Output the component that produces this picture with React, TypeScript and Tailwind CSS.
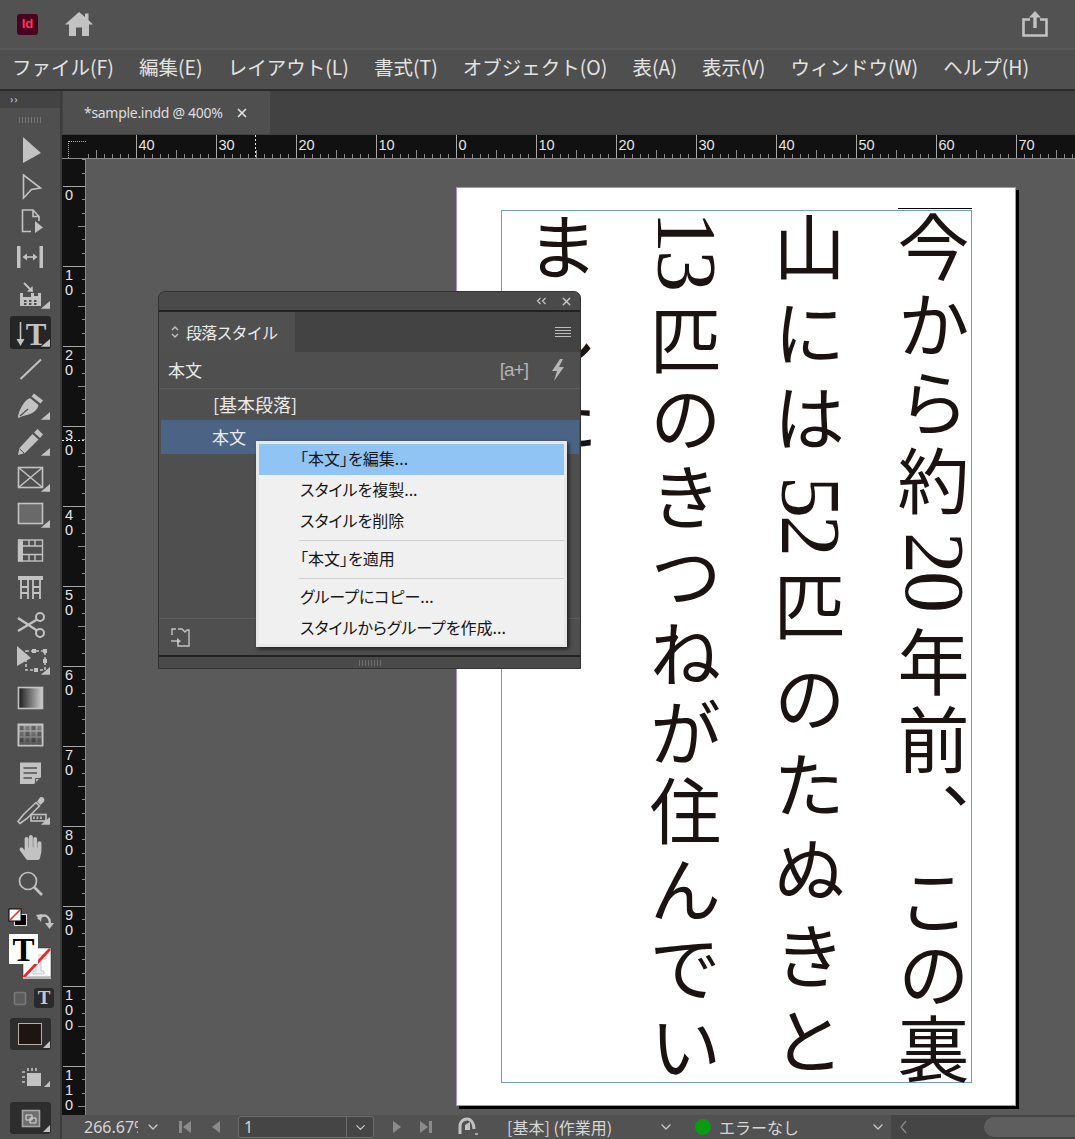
import React from 'react';
import { ChevronDown, X } from 'lucide-react';
import { FaHandPaper } from 'react-icons/fa';

const ICON = '#c2c2c2';

const menus = ['ファイル(F)', '編集(E)', 'レイアウト(L)', '書式(T)', 'オブジェクト(O)', '表(A)', '表示(V)', 'ウィンドウ(W)', 'ヘルプ(H)'];

const Corner = () => <polygon points="40,25 40,31 33,31" fill={ICON} />;

const Tool: React.FC<{ h: string; children: React.ReactNode; corner?: boolean; active?: boolean }> = ({ h, children, corner, active }) => (
  <div className={`${h} flex items-center justify-center shrink-0`}>
    <div className={active ? 'w-[41px] h-[33px] rounded-[3px] bg-[#262626] flex items-center justify-center' : 'flex items-center justify-center'}>
      <svg width="40" height="36" viewBox="0 0 40 36" fill="none" stroke={ICON} strokeWidth="1.6">
        {children}
        {corner && <Corner />}
      </svg>
    </div>
  </div>
);

const Tools = () => (
  <div className="flex flex-col">
    <Tool h="h-[36px]"><polygon points="13,5 31,21 13,31" fill={ICON} stroke="none" /></Tool>
    <Tool h="h-[36px]"><polygon points="13.5,7 30.5,20 21.5,21.5 13.5,30" /></Tool>
    <Tool h="h-[34px]">
      <path d="M21 28.5H12.5V7H23L29 13.5V18M23 7V13.5H29" />
      <polygon points="25,18 33,24.5 25,30" fill={ICON} stroke="none" />
    </Tool>
    <Tool h="h-[38px]">
      <rect x="7" y="7" width="3.5" height="22" fill={ICON} stroke="none" />
      <rect x="29.5" y="7" width="3.5" height="22" fill={ICON} stroke="none" />
      <path d="M16 18H24" />
      <polygon points="12.5,18 17,14.5 17,21.5" fill={ICON} stroke="none" />
      <polygon points="27.5,18 23,14.5 23,21.5" fill={ICON} stroke="none" />
    </Tool>
    <Tool h="h-[38px]" corner>
      <path d="M10 16V29H31V16H28V19H24V16H21V20H13V16Z" fill={ICON} stroke="none" />
      <path d="M14 24h2.5M19 24h2.5M24 24h2.5M19 27h2.5M14 27h2.5M24 27h2.5" stroke="#505050" strokeWidth="2" />
      <path d="M14 6L21 13" strokeWidth="2" />
      <polygon points="23,15 22.5,9 17,14.5" fill={ICON} stroke="none" />
    </Tool>
    <Tool h="h-[37px]" active corner>
      <path d="M10.5 7V27" strokeWidth="1.6" />
      <polygon points="10.5,31 6.5,24 14.5,24" fill={ICON} stroke="none" />
      <text x="26" y="30" textAnchor="middle" fontFamily="'Liberation Serif',serif" fontWeight="700" fontSize="31" fill={ICON} stroke="none">T</text>
    </Tool>
    <Tool h="h-[36px]"><path d="M10.5 28L31 8.5" strokeWidth="2" /></Tool>
    <Tool h="h-[37px]" corner>
      <path d="M24 5.5L33 12.5L30.5 15.5L21.5 8.5Z" fill={ICON} stroke="none" />
      <path d="M20 10L28.5 17C27.5 23 21 26.5 13 28L8.5 30L8 28C10 21 13.5 13 20 10Z" fill={ICON} stroke="none" />
      <path d="M10 28L18 21" stroke="#505050" strokeWidth="1.3" />
    </Tool>
    <Tool h="h-[36px]" corner>
      <path d="M27.5 5L33 10.5L30 14L24 8.5Z" fill={ICON} stroke="none" />
      <path d="M22.5 10L28.5 15.5L15 29L8 31L9.5 24Z" fill={ICON} stroke="none" />
      <path d="M9.8 25L14 29" stroke="#505050" strokeWidth="1" />
    </Tool>
    <Tool h="h-[36px]" corner>
      <rect x="8.5" y="7.5" width="24" height="20" />
      <path d="M8.5 7.5L32.5 27.5M32.5 7.5L8.5 27.5" />
    </Tool>
    <Tool h="h-[36px]" corner><rect x="8.5" y="7.5" width="24" height="20" fill="#696969" /></Tool>
    <Tool h="h-[36px]">
      <rect x="8.5" y="8" width="24" height="21" strokeWidth="1.4" />
      <rect x="8" y="7.5" width="5" height="22" fill={ICON} stroke="none" />
      <path d="M13 14H32M13 22.5H32M19 8V14M25 8V14M19 22.5V29M25 22.5V29" strokeWidth="1.4" />
    </Tool>
    <Tool h="h-[38px]">
      <rect x="8" y="7" width="25" height="4" fill={ICON} stroke="none" />
      <path d="M11 11V30M18 11V30M23 11V30M30 11V30M11 18H18M11 24H18M23 18H30M23 24H30" strokeWidth="1.8" />
    </Tool>
    <Tool h="h-[37px]">
      <circle cx="30" cy="10" r="4" strokeWidth="2" />
      <circle cx="30" cy="26" r="4" strokeWidth="2" />
      <path d="M27 12.5L8 24M27 23.5L8 11" strokeWidth="2.4" />
    </Tool>
    <Tool h="h-[36px]" corner>
      <rect x="16" y="8" width="19" height="19" strokeDasharray="3 2" />
      <rect x="22" y="6" width="4" height="4" fill={ICON} stroke="none" />
      <rect x="33" y="6" width="4" height="4" fill={ICON} stroke="none" />
      <rect x="33" y="16" width="4" height="4" fill={ICON} stroke="none" />
      <rect x="24" y="25" width="4" height="4" fill={ICON} stroke="none" />
      <polygon points="7,3 21,15 7,23" fill={ICON} stroke="none" />
    </Tool>
    <Tool h="h-[37px]">
      <defs>
        <linearGradient id="grad" x1="0" x2="1" y1="0" y2="0">
          <stop offset="0" stopColor="#1b1b1b" />
          <stop offset="1" stopColor="#cfcfcf" />
        </linearGradient>
      </defs>
      <rect x="8.5" y="7.5" width="24" height="21" fill="url(#grad)" />
    </Tool>
    <Tool h="h-[37px]">
      <defs>
        <pattern id="check" width="12" height="12" patternUnits="userSpaceOnUse" x="8.5" y="8">
          <rect width="12" height="12" fill="#7a7a7a" />
          <rect width="6" height="6" fill="#555555" />
          <rect x="6" y="6" width="6" height="6" fill="#555555" />
        </pattern>
        <linearGradient id="fade" x1="0" x2="0" y1="0" y2="1">
          <stop offset="0" stopColor="#8a8a8a" stopOpacity="0.3" />
          <stop offset="1" stopColor="#222222" stopOpacity="0.7" />
        </linearGradient>
      </defs>
      <rect x="8.5" y="7.5" width="24" height="21" fill="url(#check)" />
      <rect x="8.5" y="7.5" width="24" height="21" fill="url(#fade)" />
    </Tool>
    <Tool h="h-[39px]">
      <path d="M10 7.5H31V22L24 29H10Z" fill={ICON} stroke="none" />
      <path d="M13.5 13H27M13.5 18H27M13.5 23H22" stroke="#505050" strokeWidth="1.6" />
      <path d="M31 23.5H25.5V29" stroke="#505050" strokeWidth="1" />
    </Tool>
    <Tool h="h-[38px]" corner>
      <path d="M30 4.5C32.5 3 35.5 6 34 8.5L30.5 12L27 8.5Z" fill={ICON} stroke="none" />
      <path d="M26 9.5L29.5 13L17 25.5L10 30.5L8 28.5L13.5 21.5Z" stroke={ICON} />
      <rect x="21" y="21.5" width="15" height="6.5" fill="#505050" />
      <path d="M24 23.5V26M27.5 23.5V26M31 23.5V26" strokeWidth="1.6" />
    </Tool>
    <Tool h="h-[35px]">
      <foreignObject x="8" y="5" width="26" height="26">
        <FaHandPaper size={25} color={ICON} />
      </foreignObject>
    </Tool>
    <Tool h="h-[35px]">
      <circle cx="18" cy="16" r="8.5" strokeWidth="1.7" />
      <path d="M24 22L32 30" strokeWidth="2.6" />
    </Tool>
  </div>
);

const Swatches = () => (
  <svg width="60" height="239" viewBox="0 0 60 239" className="shrink-0" fill="none">
    <rect x="14.5" y="9.5" width="12" height="11" fill="#000" stroke="#ddd" />
    <rect x="9" y="4" width="12" height="12" fill="#fff" stroke="#000" />
    <path d="M10 15L20 5" stroke="#e03030" strokeWidth="1.6" />
    <path d="M38 14C44 8 50 10 50 20" stroke={ICON} strokeWidth="2.4" />
    <polygon points="36,10 42,9 41,17" fill={ICON} />
    <polygon points="45,18 54,18 49.5,24" fill={ICON} />
    <rect x="23" y="43" width="28" height="29" fill="#fff" stroke="#222" strokeWidth="0.5" />
    <path d="M31 50H46V54H41V66H44V69H33V66H36V54H31Z" fill="#eee" stroke="#bbb" strokeWidth="0.8" />
    <path d="M23 73L50 44" stroke="#e8262a" strokeWidth="2.6" />
    <path d="M23 73H51" stroke="#fff" strokeWidth="1.2" />
    <rect x="9" y="29" width="29" height="30" fill="#fff" />
    <text x="23.5" y="56" textAnchor="middle" fontFamily="'Liberation Serif',serif" fontWeight="700" fontSize="33" fill="#000">T</text>
    <rect x="14.5" y="87.5" width="11" height="12" rx="1" fill="#5c5c5c" stroke="#777" strokeWidth="1.6" />
    <rect x="34" y="83" width="20" height="20" rx="3" fill="#2a2a2a" />
    <text x="44" y="99" textAnchor="middle" fontFamily="'Liberation Serif',serif" fontWeight="700" fontSize="19" fill="#c8c8c8">T</text>
    <rect x="10" y="113" width="41" height="32" rx="3" fill="#2d2d2d" />
    <rect x="18.5" y="118.5" width="23" height="21" fill="#1e1412" stroke="#b9aea8" />
    <polygon points="50,136 50,143 43,143" fill={ICON} />
    <rect x="27" y="168" width="14" height="13" fill={ICON} />
    <path d="M22 167h3M22 172h3M22 177h3M28 163v3M32 163v3M36 163v3" stroke={ICON} strokeWidth="1.6" />
    <polygon points="50,176 50,182 44,182" fill={ICON} />
    <rect x="10" y="197" width="41" height="32" rx="3" fill="#2d2d2d" />
    <rect x="22.5" y="205.5" width="17" height="16" fill="#6e6e6e" stroke="#a5a5a5" strokeWidth="1.6" />
    <path d="M26 210h6v5h-6zM30 213h6v5h-6z" stroke="#ddd" strokeWidth="1" />
    <polygon points="50,220 50,227 43,227" fill={ICON} />
  </svg>
);

const range = (n: number) => Array.from({ length: n }, (_, i) => i);

const TopRuler = () => (
  <svg width="989" height="24" viewBox="0 0 989 24" className="block shrink-0 font-['Liberation_Sans',sans-serif]">
    <rect width="989" height="24" fill="#111" />
    {range(130).map((i) => {
      const x = 370.5 + (i - 46) * 8;
      const major = (i - 46) % 10 === 0;
      const mid = (i - 46) % 5 === 0;
      return <path key={i} d={`M${x} ${major ? 0 : mid ? 15 : 19}V23`} stroke={major ? '#a8a8a8' : '#8c8c8c'} strokeWidth="1" />;
    })}
    {[40, 30, 20, 10, 0, 10, 20, 30, 40, 50, 60, 70].map((v, i) => (
      <text key={i} x={52.5 + i * 80} y="15" fontSize="14.5" fill="#e4e4e4">{v}</text>
    ))}
    <path d="M169.5 0V23" stroke="#eee" strokeDasharray="2 2" />
    <path d="M0 23.5H989" stroke="#8a8a8a" />
  </svg>
);

// vertical ruler is split in six, not ten
const LeftRuler = () => (
  <svg width="24" height="956" viewBox="0 0 24 956" className="block shrink-0 font-['Liberation_Sans',sans-serif]">
    <rect width="24" height="956" fill="#111" />
    {range(74).map((i) => {
      const y = Math.round(27 + ((i - 2) * 80) / 6) + 0.5;
      const major = (i - 2) % 6 === 0;
      const mid = (i - 2) % 3 === 0;
      return <path key={i} d={`M${major ? 1 : mid ? 16 : 20} ${y}H24`} stroke={major ? '#a8a8a8' : '#8c8c8c'} strokeWidth="1" />;
    })}
    {range(12).map((i) =>
      String(i * 10).split('').map((d, j) => (
        <text key={`${i}-${j}`} x="3" y={27 + i * 80 + 14 + j * 15} fontSize="14.5" fill="#e4e4e4">{d}</text>
      ))
    )}
    <path d="M0 281.5H24" stroke="#eee" strokeDasharray="2 2" />
    <path d="M23.5 0V956" stroke="#8a8a8a" />
  </svg>
);

const Column: React.FC<{ tracking: string; children: React.ReactNode }> = ({ tracking, children }) => (
  <div className={`w-[73px] h-full shrink-0 whitespace-nowrap text-[72px] leading-[73px] text-[#1a1311] [writing-mode:vertical-rl] ${tracking}`}>
    {children}
  </div>
);

const Page = () => (
  <div className="absolute left-[370px] top-[28px] w-[560px] h-[919px] bg-white border border-[#b48ac4] shadow-[3px_3px_0_#000] font-['Liberation_Serif','Noto_Sans_CJK_JP',serif]">
    <div className="relative mt-[22px] ml-[44px] w-[471px] h-[873px] border border-[#6d9bd6] flex flex-row-reverse gap-[51px] pr-[8px] overflow-visible">
      <Column tracking="tracking-[6px]">今から約<span className="relative left-[8px] pt-[9px] text-[84px] tracking-[-3px]">20</span><span className="pt-[16px]">年前、</span><span className="pt-[5px] tracking-[2px]">この裏</span></Column>
      <Column tracking="tracking-[13.5px]">山には<span className="relative left-[8px] pt-[8px] text-[84px] tracking-[-3px]">52</span><span className="pt-[16px]">匹</span><span className="pt-[8px]">のたぬきと</span></Column>
      <Column tracking="tracking-[6.5px]"><span className="relative left-[8px] text-[84px] tracking-[-3px]">13</span><span className="pt-[15px]">匹のきつねが住んでい</span></Column>
      <Column tracking="tracking-[13.5px]">ました</Column>
      <div className="absolute right-[-1px] top-[-3px] w-[74px] h-px bg-black" />
    </div>
  </div>
);

const items: (string | null)[] = ['「本文」を編集...', 'スタイルを複製...', 'スタイルを削除', null, '「本文」を適用', null, 'グループにコピー...', 'スタイルからグループを作成...'];

const ContextMenu = () => (
  <div className="absolute left-[97px] top-[149px] w-[311px] h-[206px] bg-[#f0f0f0] border-[3px] border-[#e8e8e8] shadow-[2px_2px_4px_rgba(0,0,0,0.6)] text-[16px] text-[#161616] flex flex-col [font-feature-settings:'palt']">
    {items.map((item, i) =>
      item === null ? (
        <div key={i} className="h-[7px] flex items-center pl-[40px]">
          <div className="w-full h-px bg-[#d0d0d0]" />
        </div>
      ) : (
        <div key={i} className={`h-[31px] shrink-0 flex items-center pl-[41px] pb-[3px] ${i === 0 ? 'bg-[#90c4f5]' : ''}`}>{item}</div>
      )
    )}
  </div>
);

const StylePanel = () => (
  <div className="absolute left-[72px] top-[132px] w-[423px] h-[378px] flex flex-col rounded-t-[7px] bg-[#4f4f4f] border border-[#333] text-[#eaeaea]">
    <div className="h-[18px] rounded-t-[7px] bg-[#4a4a4a] flex items-center justify-end gap-[13px] pr-[7px] shrink-0">
      <svg width="11" height="8" viewBox="0 0 11 8" fill="none" stroke="#c8c8c8" strokeWidth="1.2"><path d="M4.5 1L1.5 4L4.5 7M9.5 1L6.5 4L9.5 7" /></svg>
      <X size={13} strokeWidth={2.5} color="#c8c8c8" />
    </div>
    <div className="h-[2px] bg-[#222] shrink-0" />
    <div className="h-[40px] flex bg-[#434343] shrink-0 ml-[1px]">
      <div className="w-[135px] bg-[#505050] flex items-center pl-[10px] gap-[6px]">
        <svg width="10" height="14" viewBox="0 0 10 14" fill="none" stroke="#bdbdbd" strokeWidth="1.5"><path d="M2 5L5 2L8 5M2 9L5 12L8 9" /></svg>
        <span className="text-[16px] tracking-[-0.8px]">段落スタイル</span>
      </div>
      <div className="flex-1 flex items-center justify-end pr-[9px]">
        <svg width="16" height="12" viewBox="0 0 16 12" stroke="#bdbdbd" strokeWidth="1.2"><path d="M0 1.5H16M0 4.5H16M0 7.5H16M0 10.5H16" /></svg>
      </div>
    </div>
    <div className="h-[37px] flex items-center pl-[9px] pr-[15px] border-b border-[#5c5c5c] shrink-0">
      <span className="flex-1 text-[17px]">本文</span>
      <span className="text-[19px] text-[#b5b5b5] mr-[23px] font-['Liberation_Sans',sans-serif] font-light tracking-[-1px]">[a+]</span>
      <svg width="14" height="22" viewBox="0 0 14 22" fill="#b5b5b5"><polygon points="9,0 1,12 6,12 3,22 13,8 8,8 12,0" /></svg>
    </div>
    <div className="h-[31px] flex items-center pl-[54px] text-[18px] shrink-0">[基本段落]</div>
    <div className="h-[34px] flex items-center pl-[51px] ml-[2px] mr-[1px] text-[17px] bg-[#4b6485] shrink-0">本文</div>
    <div className="flex-1" />
    <div className="h-[37px] flex items-center pl-[11px] border-t border-[#5c5c5c] shrink-0">
      <svg width="21" height="21" viewBox="0 0 21 21" fill="none" stroke="#c2c2c2" strokeWidth="1.4">
        <path d="M2 8V2H6M8 2H12L15 5L17 3H19V19H8V15" />
        <path d="M1 14H9" />
        <polygon points="11,14 7,11 7,17" fill="#c2c2c2" stroke="none" />
      </svg>
    </div>
    <div className="h-[2px] bg-[#222] shrink-0" />
    <div className="flex-1 max-h-[11px] min-h-[9px] flex items-center justify-center bg-[#4a4a4a] gap-[2px] rounded-b-[1px]">
      {range(8).map((i) => <div key={i} className="w-px h-[6px] bg-[#6e6e6e]" />)}
    </div>
    <ContextMenu />
  </div>
);

const StatusBar = () => (
  <div className="h-[24px] shrink-0 flex items-center bg-[#525252] text-[#d6d6d6] text-[16px] leading-[22px]">
    <div className="w-[54px] ml-[22px] overflow-hidden whitespace-nowrap font-['Noto_Sans',sans-serif]">266.67%</div>
    <ChevronDown size={16} color="#c8c8c8" className="ml-[7px]" />
    <svg width="14" height="14" viewBox="0 0 14 14" fill="#8b8b8b" className="ml-[17px]"><rect x="1" y="1" width="3" height="12" /><polygon points="13,1 5,7 13,13" /></svg>
    <svg width="10" height="14" viewBox="0 0 10 14" fill="#8b8b8b" className="ml-[19px]"><polygon points="9,1 1,7 9,13" /></svg>
    <div className="ml-[17px] h-[22px] w-[136px] flex items-center rounded-[3px] border border-[#6b6b6b] bg-[#454545]">
      <span className="flex-1 pl-[5px] font-['Noto_Sans',sans-serif]">1</span>
      <div className="w-[27px] h-full flex items-center justify-center border-l border-[#6b6b6b]"><ChevronDown size={15} color="#c8c8c8" /></div>
    </div>
    <svg width="10" height="14" viewBox="0 0 10 14" fill="#8b8b8b" className="ml-[18px]"><polygon points="1,1 9,7 1,13" /></svg>
    <svg width="14" height="14" viewBox="0 0 14 14" fill="#8b8b8b" className="ml-[17px]"><polygon points="1,1 9,7 1,13" /><rect x="10" y="1" width="3" height="12" /></svg>
    <svg width="22" height="20" viewBox="0 0 22 20" fill="none" className="ml-[24px]">
      <path d="M3 17V9C3 5 6 2 10 2C14 2 17 6 17 12" stroke="#c2c2c2" strokeWidth="3" />
      <path d="M8 8L13 5V13H8Z" fill="#c2c2c2" />
      <path d="M18 17h3" stroke="#c2c2c2" strokeWidth="1.5" />
    </svg>
    <span className="ml-[28px] w-[151px] whitespace-nowrap pb-[1px]">[基本] (作業用)</span>
    <ChevronDown size={16} color="#c8c8c8" />
    <div className="ml-[21px] w-[16px] h-[16px] rounded-full bg-[#0a9a14]" />
    <span className="ml-[8px] w-[151px] whitespace-nowrap pb-[1px]">エラーなし</span>
    <ChevronDown size={16} color="#c8c8c8" />
    <div className="ml-[5px] flex-1 h-full bg-[#454545] flex items-center">
      <svg width="8" height="14" viewBox="0 0 8 14" fill="none" stroke="#8b8b8b" strokeWidth="1.2" className="ml-[9px]"><path d="M6 1L1 7L6 13" /></svg>
      <div className="ml-[76px] flex-1 h-[20px] rounded-l-full bg-[#5e5e5e]" />
    </div>
  </div>
);

export default function App() {
  return (
    <div className="w-[1075px] h-[1139px] overflow-hidden flex flex-col bg-[#4f4f4f] font-['Noto_Sans_CJK_JP','Noto_Sans',sans-serif]">
      <header className="h-[50px] shrink-0 bg-[#525252] border-b-2 border-[#5a5a5a] flex items-center">
        <div className="ml-[17px] w-[21px] h-[21px] rounded-[3px] bg-[#49021f] flex items-center justify-center text-[13px] font-bold text-[#ff3366] font-['Liberation_Sans',sans-serif]">Id</div>
        <svg width="28" height="24" viewBox="0 0 28 24" fill={ICON} className="ml-[27px]">
          <path d="M14 0L20 5V1.5H23.5V8L28 12.5H24V24H17V15.5H11V24H4V12.5H0Z" />
        </svg>
        <svg width="26" height="26" viewBox="0 0 26 26" fill="none" stroke={ICON} className="ml-auto mr-[27px]">
          <path d="M8 8.5H1.5V24.5H24.5V8.5H18" strokeWidth="2.6" />
          <path d="M13 4V17" strokeWidth="3.4" />
          <polygon points="13,0 19,6.5 7,6.5" fill={ICON} stroke="none" />
        </svg>
      </header>
      <nav className="h-[41px] shrink-0 flex items-center gap-[25px] pl-[12px] pb-[5px] bg-[#4f4f4f] border-b-2 border-[#2a2a2a] text-[19.5px] text-[#e3e3e3] whitespace-nowrap">
        {menus.map((m) => <span key={m}>{m}</span>)}
      </nav>
      <div className="flex-1 flex min-h-0">
        <aside className="w-[62px] shrink-0 flex flex-col bg-[#4f4f4f] border-r-2 border-[#3c3c3c]">
          <div className="h-[17px] bg-[#434343] text-[#c8c8c8] text-[10px] leading-[15px] font-bold pl-[10px] tracking-[1px] shrink-0">››</div>
          <div className="h-[24px] flex items-center justify-center gap-[2px] shrink-0">
            {range(8).map((i) => <div key={i} className="w-px h-[6px] bg-[#757575]" />)}
          </div>
          <Tools />
          <div className="h-[5px] shrink-0" />
          <Swatches />
        </aside>
        <main className="flex-1 min-w-0 flex flex-col">
          <div className="h-[44px] shrink-0 bg-[#424242] flex">
            <div className="ml-px w-[207px] h-[43px] bg-[#4f4f4f] flex items-center pl-[21px] text-[14px] text-[#dedede] font-['Noto_Sans',sans-serif]">
              <span className="tracking-[-0.3px] whitespace-nowrap">*sample.indd @ 400%</span>
              <X size={14} strokeWidth={3} color="#dedede" className="ml-[12px]" />
            </div>
          </div>
          <div className="h-[24px] shrink-0 flex">
            <div className="w-[24px] h-[24px] bg-[#111] border-b border-[#8a8a8a] relative">
              <div className="absolute left-[6px] top-[6px] w-[18px] h-[17px] border-l border-t border-dotted border-[#aaa]" />
            </div>
            <TopRuler />
          </div>
          <div className="flex-1 flex min-h-0">
            <LeftRuler />
            <div className="relative flex-1 bg-[#5a5a5a] overflow-hidden">
              <Page />
              <StylePanel />
            </div>
          </div>
          <StatusBar />
        </main>
      </div>
    </div>
  );
}
